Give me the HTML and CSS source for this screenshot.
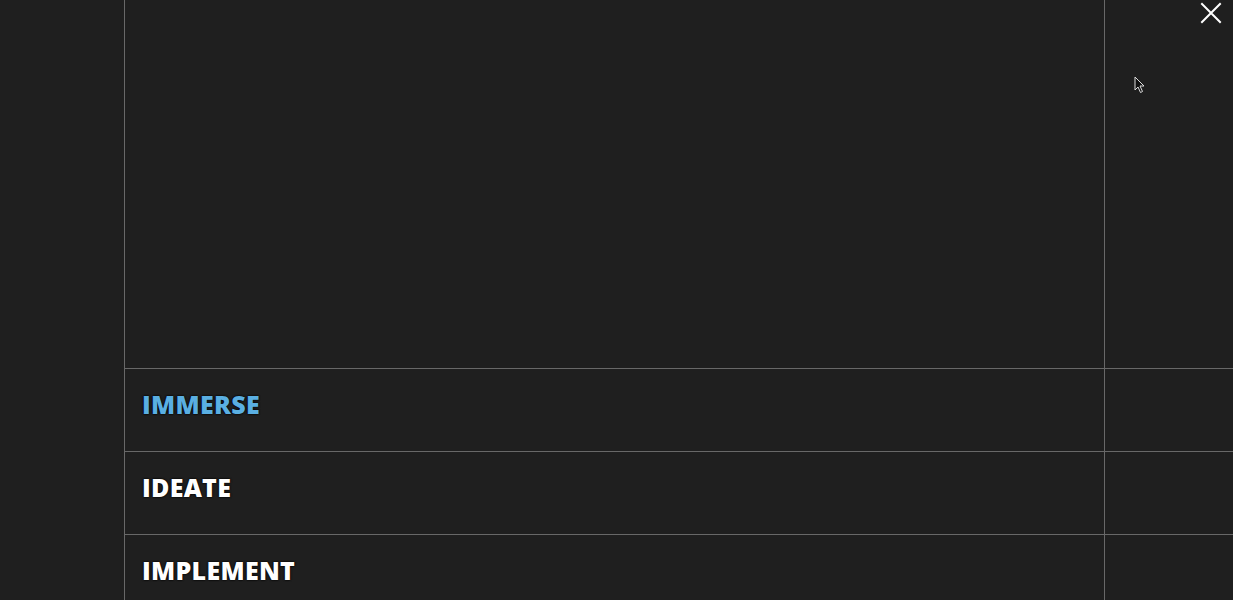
FILE: index.html
```html
<!DOCTYPE html>
<html lang="en">
<head>
    <meta charset="UTF-8">
    <meta name="viewport" content="width=device-width, initial-scale=1.0">
    <title>Process</title>
    <link rel="stylesheet" href="styles.css">
</head>
<body>
    <button class="close" aria-label="Close">
        <svg width="22" height="22" viewBox="0 0 22 22"><path d="M2 2L20 20M20 2L2 20" stroke="#fff" stroke-width="2" stroke-linecap="square"/></svg>
    </button>
    <svg class="cursor" width="12" height="18" viewBox="0 0 12 18"><path d="M1 1L1 14L4 11L6.5 16.5L8.5 15.5L6 10L10 10Z" fill="#111" stroke="#ddd" stroke-width="1"/></svg>

    <div class="grid">
        <div class="row hero">
            <div class="main"></div>
            <div class="side"></div>
        </div>
        <div class="row">
            <div class="main"><span class="label active">IMMERSE</span></div>
            <div class="side"></div>
        </div>
        <div class="row">
            <div class="main"><span class="label">IDEATE</span></div>
            <div class="side"></div>
        </div>
        <div class="row">
            <div class="main"><span class="label">IMPLEMENT</span></div>
            <div class="side"></div>
        </div>
    </div>
</body>
</html>
```
FILE: styles.css
```css
body {
    margin: 0;
    background-color: #1f1f1f;
    font-family: "Open Sans", "Liberation Sans", sans-serif;
    overflow: hidden;
}

.grid {
    margin-left: 124px;
    border-left: 1px solid #686868;
}

.row {
    display: flex;
    height: 82px;
    border-top: 1px solid #686868;
}

.row.hero {
    height: 368px;
    border-top: none;
}

.main {
    width: 980px;
    border-right: 1px solid #686868;
    display: flex;
    align-items: center;
    padding: 0 0 12px 17px;
    box-sizing: border-box;
}

.side {
    flex: 1;
}

.label {
    color: #fff;
    font-size: 25px;
    font-weight: 800;
    letter-spacing: 0.3px;
    text-shadow: 0 0 2px #000, 0 0 2px #000;
}

.label.active {
    color: #5aafe2;
}

.close {
    position: absolute;
    top: 2px;
    right: 11px;
    background: none;
    border: none;
    padding: 0;
    cursor: pointer;
}

.cursor {
    position: absolute;
    left: 1134px;
    top: 76px;
}
```
